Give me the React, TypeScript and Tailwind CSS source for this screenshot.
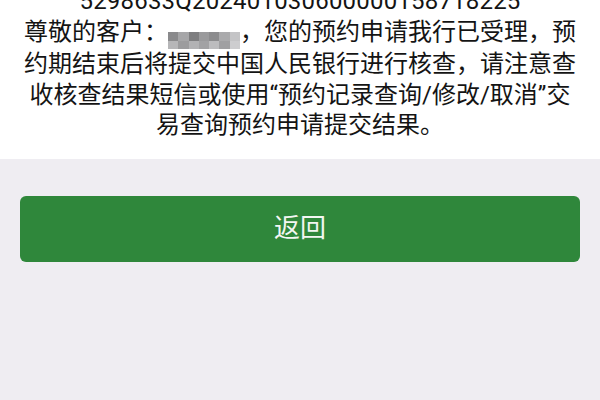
const blurCells = [
  ['#8a8a8c', '#a6a6a8', '#7e7e80', '#9a9a9c', '#8c8c8e', '#aaaaac', '#c4c4c6'],
  ['#b6b6b8', '#9c9c9e', '#b2b2b4', '#a2a2a4', '#bcbcbe', '#a0a0a2', '#cdcdcf'],
]

function BlurredName() {
  return (
    <span className="inline-flex h-[17px] w-[72px] flex-col overflow-hidden align-[-1px] blur-[0.6px]">
      {blurCells.map((row, i) => (
        <span key={i} className="flex h-1/2 w-full">
          {row.map((c, j) => (
            <span key={j} className="h-full flex-1" style={{ backgroundColor: c }} />
          ))}
        </span>
      ))}
    </span>
  )
}

export default function App() {
  return (
    <div
      className="h-[400px] w-[600px] overflow-hidden bg-[#efedf2]"
      style={{ fontFamily: 'Roboto, "Noto Sans CJK SC", sans-serif' }}
    >
      <div className="bg-white px-[20px] pb-[18px]">
        <div className="-mt-[14px] text-center text-[24px] leading-[30.5px] text-[#141414]">
          <div className="tracking-[0.2px]">5298633Q202401030600000158718225</div>
          <div>
            尊敬的客户：<BlurredName />，您的预约申请我行已受理，预
          </div>
          <div>约期结束后将提交中国人民银行进行核查，请注意查</div>
          <div>收核查结果短信或使用“预约记录查询/修改/取消”交</div>
          <div>易查询预约申请提交结果。</div>
        </div>
      </div>

      <div className="px-[20px] pt-[37px]">
        <button className="flex h-[66px] w-full items-center justify-center rounded-md bg-[#2f873b] text-[26px] text-[#f3f6f2]">
          返回
        </button>
      </div>
    </div>
  )
}
